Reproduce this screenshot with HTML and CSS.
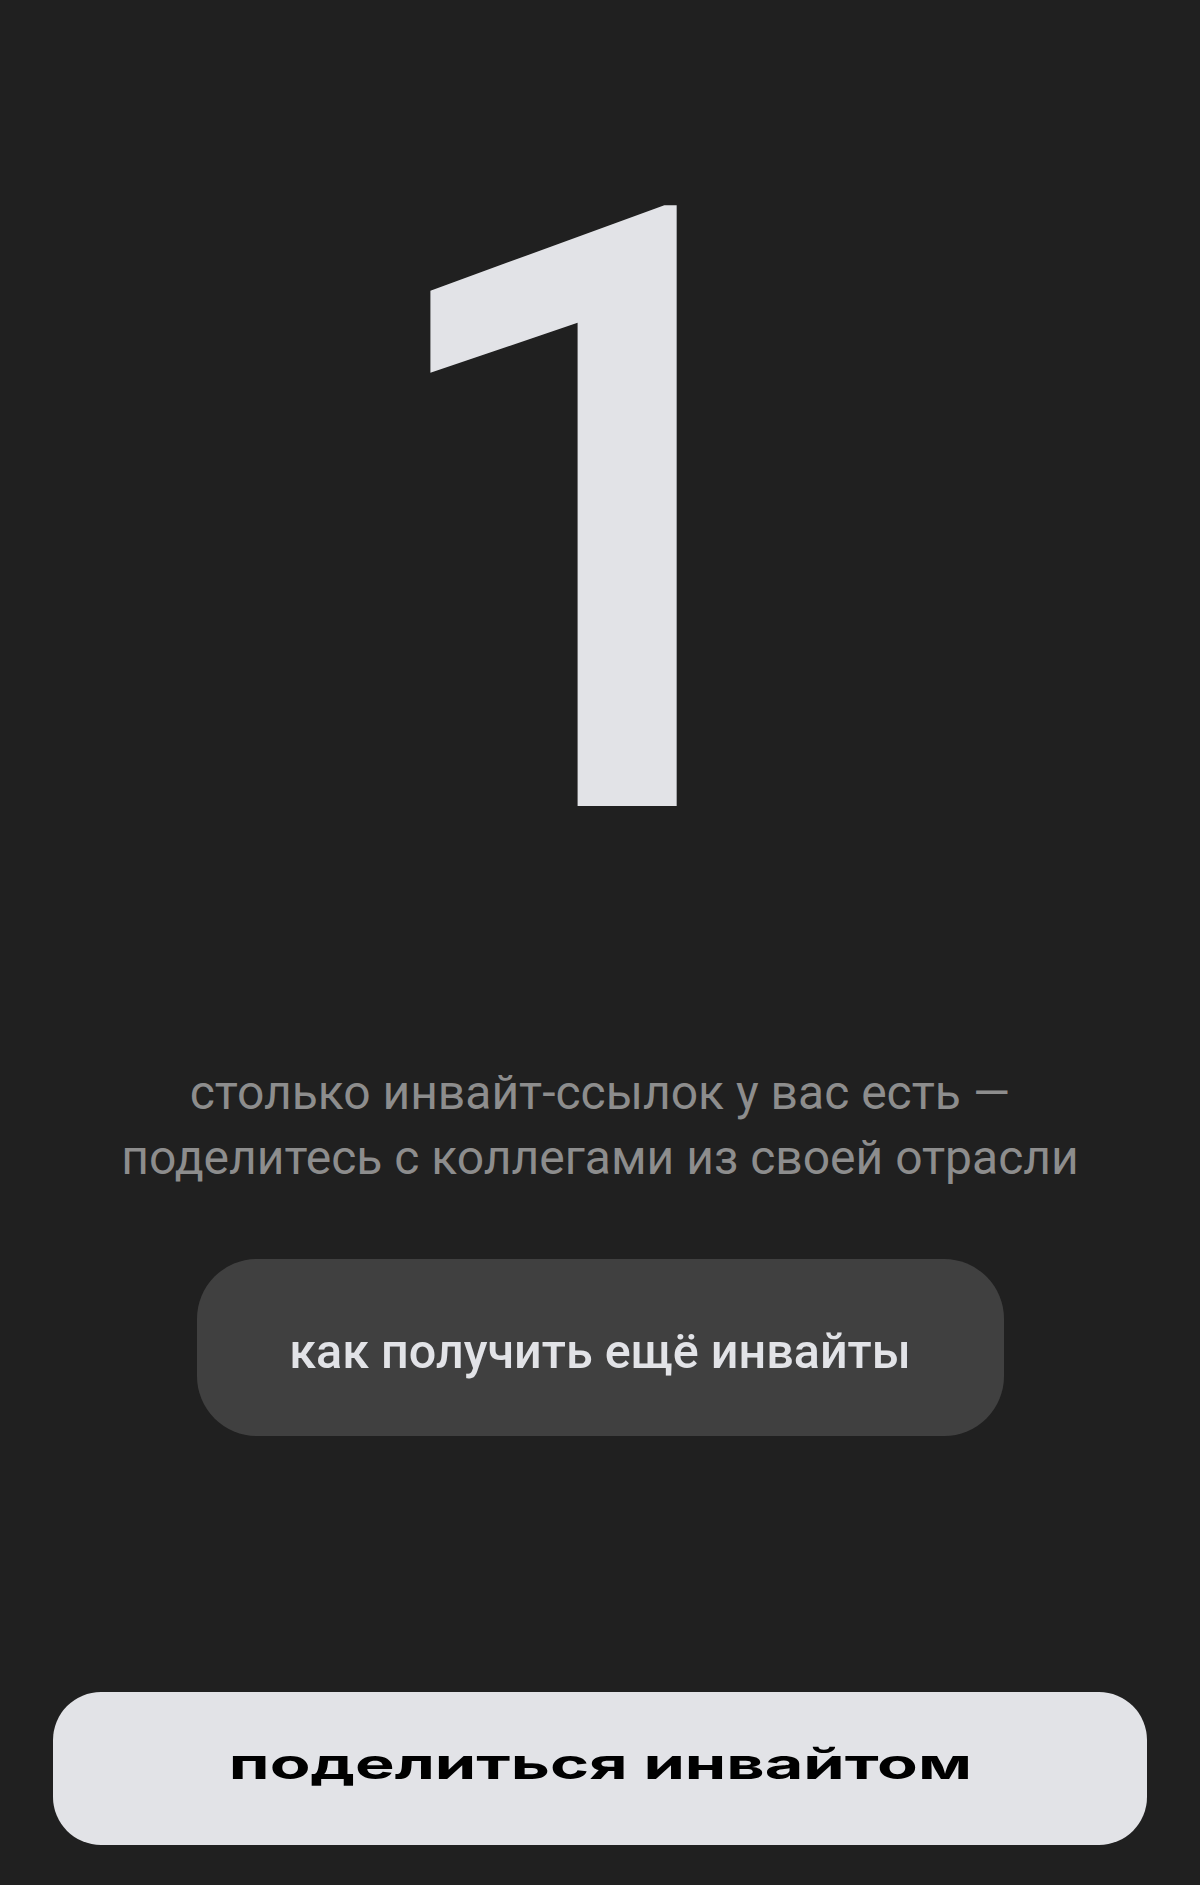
FILE: index.html
```html
<!DOCTYPE html>
<html lang="ru">
<head>
    <meta charset="UTF-8">
    <meta name="viewport" content="width=device-width, initial-scale=1.0">
    <title>Инвайты</title>
    <link rel="stylesheet" href="styles.css">
</head>
<body>
    <div class="screen">
        <!-- Invite counter -->
        <div class="count">1</div>

        <p class="hint">столько инвайт-ссылок у вас есть —<br>поделитесь с коллегами из своей отрасли</p>

        <button class="more-btn">как получить ещё инвайты</button>

        <!-- Share action pinned to bottom -->
        <button class="share-btn"><span class="share-label">поделиться инвайтом</span></button>
    </div>
</body>
</html>
```

FILE: styles.css
```css
body { margin: 0; background-color: #202020; font-family: Roboto, "Noto Sans", sans-serif; }
.screen { min-height: 1885px; box-sizing: border-box; display: flex; flex-direction: column; align-items: center; padding: 98px 53px 40px; }
.count { font-size: 842px; line-height: 1; font-weight: 500; color: #e2e3e7; }
.hint { margin: 120px 0 0; font-size: 48px; line-height: 65px; color: #8d8d8d; text-align: center; }
.more-btn { margin-top: 69px; width: 807px; height: 177px; box-sizing: border-box; padding: 7px 0 0; border: none; border-radius: 60px; background-color: #404040; color: #e2e3e7; font-family: Roboto, sans-serif; font-size: 48.5px; font-weight: 500; cursor: pointer; }
.share-btn { margin-top: auto; width: 100%; height: 153px; box-sizing: border-box; padding: 0 0 10px; border: none; border-radius: 48px; background-color: #e2e3e7; color: #000; font-family: Inter, sans-serif; font-size: 42px; font-weight: 700; cursor: pointer; }
.share-label { display: inline-block; transform: scaleX(1.585); }
```
